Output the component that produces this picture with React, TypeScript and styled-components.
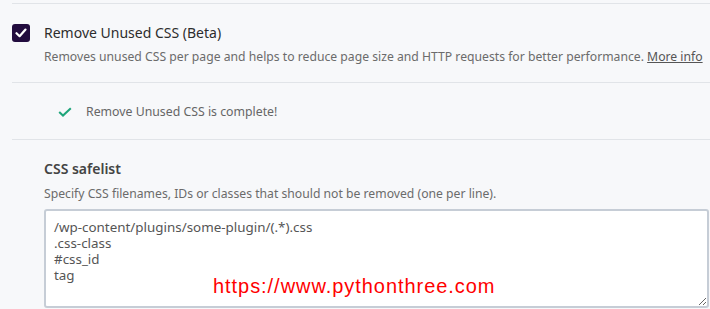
import React from 'react';
import styled, { createGlobalStyle } from 'styled-components';

const GlobalStyle = createGlobalStyle`
  html, body {
    margin: 0;
    padding: 0;
    background: #f7f8fa;
  }
  body {
    font-family: "Noto Sans", "Open Sans", Arial, sans-serif;
  }
`;

const Page = styled.div`
  width: 710px;
  height: 309px;
  padding: 3px 0 0 12px;
  box-sizing: border-box;
  overflow: hidden;
`;

const Section = styled.section<{ $pad: string }>`
  border-top: 1px solid #e1e4e8;
  padding: ${(p) => p.$pad};
`;

const OptionRow = styled.div`
  display: flex;
  align-items: flex-start;
  gap: 14px;
`;

const Checkbox = styled.span`
  flex: none;
  width: 18px;
  height: 18px;
  border-radius: 3px;
  background: #220c3e;
  display: flex;
  align-items: center;
  justify-content: center;
`;

const OptionText = styled.div`
  display: flex;
  flex-direction: column;
`;

const Title = styled.div<{ $weight?: number }>`
  font-size: 14px;
  line-height: 18px;
  color: #2d2d2d;
  font-weight: ${(p) => p.$weight ?? 400};
`;

const Desc = styled.p<{ $gap: number }>`
  margin: ${(p) => p.$gap}px 0 0 0;
  font-size: 12.2px;
  line-height: 18px;
  color: #6b6b6b;
  white-space: nowrap;

  a {
    color: #555;
    text-decoration: underline;
  }
`;

const Notice = styled.div`
  display: flex;
  align-items: center;
  gap: 14px;
  padding-left: 46px;
  font-size: 12.3px;
  color: #666;
`;

const Field = styled.div`
  padding-left: 32px;
  display: flex;
  flex-direction: column;
`;

const Box = styled.div`
  position: relative;
  margin-top: 6px;
`;

const Area = styled.textarea`
  display: block;
  width: 665px;
  height: 99px;
  box-sizing: border-box;
  border: 2px solid #c6cdd6;
  border-radius: 3px;
  background: #fff;
  padding: 8px 8px;
  font-family: "Noto Sans", "Open Sans", Arial, sans-serif;
  font-size: 13.4px;
  line-height: 16px;
  color: #555;
  resize: both;
  outline: none;
`;

const Watermark = styled.span`
  position: absolute;
  left: 169px;
  top: 66px;
  font-family: "Liberation Sans", Arial, sans-serif;
  font-size: 20px;
  letter-spacing: 0.95px;
  color: #ff0000;
  pointer-events: none;
`;

export default function App() {
  return (
    <>
      <GlobalStyle />
      <Page>
        <Section $pad="20px 0 16px 0">
          <OptionRow>
            <Checkbox>
              <svg width="12" height="10" viewBox="0 0 12 10">
                <path d="M1.5 5.2 L4.6 8.2 L10.5 1.6" fill="none" stroke="#fff" strokeWidth="2.2" strokeLinecap="round" strokeLinejoin="round" />
              </svg>
            </Checkbox>
            <OptionText>
              <Title>Remove Unused CSS (Beta)</Title>
              <Desc $gap={6}>
                Removes unused CSS per page and helps to reduce page size and HTTP requests for better performance.{' '}
                <a>More info</a>
              </Desc>
            </OptionText>
          </OptionRow>
        </Section>
        <Section $pad="20px 0 19px 0">
          <Notice>
            <svg width="14" height="10" viewBox="0 0 14 10">
              <path d="M1.2 5 L5 8.6 L12.8 1.2" fill="none" stroke="#1ea57a" strokeWidth="2" />
            </svg>
            <span>Remove Unused CSS is complete!</span>
          </Notice>
        </Section>
        <Section $pad="20px 0 0 0">
          <Field>
            <Title $weight={600} style={{ color: '#444' }}>CSS safelist</Title>
            <Desc $gap={7}>
              Specify CSS filenames, IDs or classes that should not be removed (one per line).
            </Desc>
            <Box>
              <Area
                readOnly
                defaultValue={'/wp-content/plugins/some-plugin/(.*).css\n.css-class\n#css_id\ntag'}
              />
              <Watermark>https://www.pythonthree.com</Watermark>
            </Box>
          </Field>
        </Section>
      </Page>
    </>
  );
}
